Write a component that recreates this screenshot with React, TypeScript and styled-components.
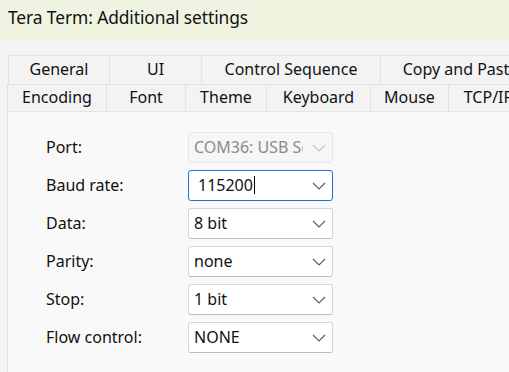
import styled, { createGlobalStyle } from "styled-components";

const GlobalStyle = createGlobalStyle`
  html, body {
    margin: 0;
    padding: 0;
    background: #f3f3f3;
  }
  body {
    font-family: "Noto Sans", "Open Sans", sans-serif;
    color: #111111;
  }
`;

const Window = styled.div`
  width: 509px;
  height: 372px;
  display: flex;
  flex-direction: column;
  overflow: hidden;
  background: #f3f3f3;
`;

const TitleBar = styled.div`
  height: 40px;
  flex: none;
  display: flex;
  align-items: center;
  padding-left: 8px;
  padding-bottom: 6px;
  box-sizing: border-box;
  background: #eff4e1;
  font-size: 17.4px;
  letter-spacing: -0.1px;
  white-space: nowrap;
`;

const Body = styled.div`
  flex: 1;
  display: flex;
  flex-direction: column;
  padding-top: 15px;
  min-height: 0;
`;

const TabRow = styled.div<{ $indent: number; $height: number }>`
  display: flex;
  height: ${(p) => p.$height}px;
  padding-left: ${(p) => p.$indent}px;
  flex: none;
`;

const Tab = styled.div<{ $w: number; $first?: boolean }>`
  width: ${(p) => p.$w}px;
  flex: none;
  box-sizing: border-box;
  display: flex;
  align-items: center;
  justify-content: center;
  border-top: 1px solid #e2e2e2;
  border-right: 1px solid #e2e2e2;
  border-left: ${(p) => (p.$first ? "1px solid #e2e2e2" : "none")};
  font-size: 16px;
  white-space: nowrap;
  overflow: hidden;
  padding-bottom: 2px;
`;

const Panel = styled.div`
  flex: 1;
  margin-left: 7px;
  background: #f9f9f9;
  border-top: 1px solid #e4e4e4;
  border-left: 1px solid #e4e4e4;
  padding: 20px 0 0 38px;
`;

const Form = styled.div`
  display: grid;
  grid-template-columns: 142px 145px;
  grid-auto-rows: 31px;
  row-gap: 7px;
  align-items: center;
`;

const Label = styled.div`
  font-size: 16px;
  padding-bottom: 1px;
`;

const Select = styled.div<{ $state?: "disabled" | "focused" }>`
  height: 31px;
  box-sizing: border-box;
  display: flex;
  align-items: center;
  background: ${(p) => (p.$state === "disabled" ? "#f6f6f6" : "#ffffff")};
  border: ${(p) =>
    p.$state === "focused"
      ? "1.5px solid #1a73d0"
      : p.$state === "disabled"
      ? "1px solid #e6e6e6"
      : "1px solid #d6d6d6"};
  border-bottom-color: ${(p) =>
    p.$state === "focused" ? "#1a73d0" : p.$state === "disabled" ? "#e6e6e6" : "#bcbcbc"};
  border-radius: 3px;
  padding-left: ${(p) => (p.$state === "focused" ? "9px" : "5px")};
  padding-right: 6px;
  color: ${(p) => (p.$state === "disabled" ? "#8b8b8b" : "#111111")};
  font-size: 16px;
`;

const Value = styled.span`
  flex: 1;
  margin-right: 9px;
  white-space: nowrap;
  overflow: hidden;
  display: flex;
  align-items: center;
  padding-bottom: 1px;
`;

const Caret = styled.span`
  display: inline-block;
  width: 1px;
  height: 18px;
  background: #000;
  margin-left: 1px;
`;

const Chevron = ({ muted }: { muted?: boolean }) => (
  <svg width="14" height="8" viewBox="0 0 14 8" style={{ flex: "none" }}>
    <polyline
      points="1,1 7,7 13,1"
      fill="none"
      stroke={muted ? "#c4c4c4" : "#5f5f5f"}
      strokeWidth="1.2"
    />
  </svg>
);

const row1 = [
  { label: "General", w: 102 },
  { label: "UI", w: 92 },
  { label: "Control Sequence", w: 179 },
  { label: "Copy and Paste", w: 160 },
];

const row2 = [
  { label: "Encoding", w: 100 },
  { label: "Font", w: 79 },
  { label: "Theme", w: 81 },
  { label: "Keyboard", w: 104 },
  { label: "Mouse", w: 78 },
  { label: "TCP/IP", w: 80 },
];

const fields: { label: string; value: string; state?: "disabled" | "focused" }[] = [
  { label: "Port:", value: "COM36: USB Serial Device", state: "disabled" },
  { label: "Baud rate:", value: "115200", state: "focused" },
  { label: "Data:", value: "8 bit" },
  { label: "Parity:", value: "none" },
  { label: "Stop:", value: "1 bit" },
  { label: "Flow control:", value: "NONE" },
];

function App() {
  return (
    <>
      <GlobalStyle />
      <Window>
        <TitleBar>Tera Term: Additional settings</TitleBar>
        <Body>
          <TabRow $indent={8} $height={29}>
            {row1.map((t, i) => (
              <Tab key={t.label} $w={t.w} $first={i === 0}>
                {t.label}
              </Tab>
            ))}
          </TabRow>
          <TabRow $indent={7} $height={27}>
            {row2.map((t, i) => (
              <Tab key={t.label} $w={t.w} $first={i === 0}>
                {t.label}
              </Tab>
            ))}
          </TabRow>
          <Panel>
            <Form>
              {fields.map((f) => (
                <>
                  <Label key={f.label}>{f.label}</Label>
                  <Select $state={f.state}>
                    <Value>
                      {f.value}
                      {f.state === "focused" && <Caret />}
                    </Value>
                    <Chevron muted={f.state === "disabled"} />
                  </Select>
                </>
              ))}
            </Form>
          </Panel>
        </Body>
      </Window>
    </>
  );
}

export default App;
